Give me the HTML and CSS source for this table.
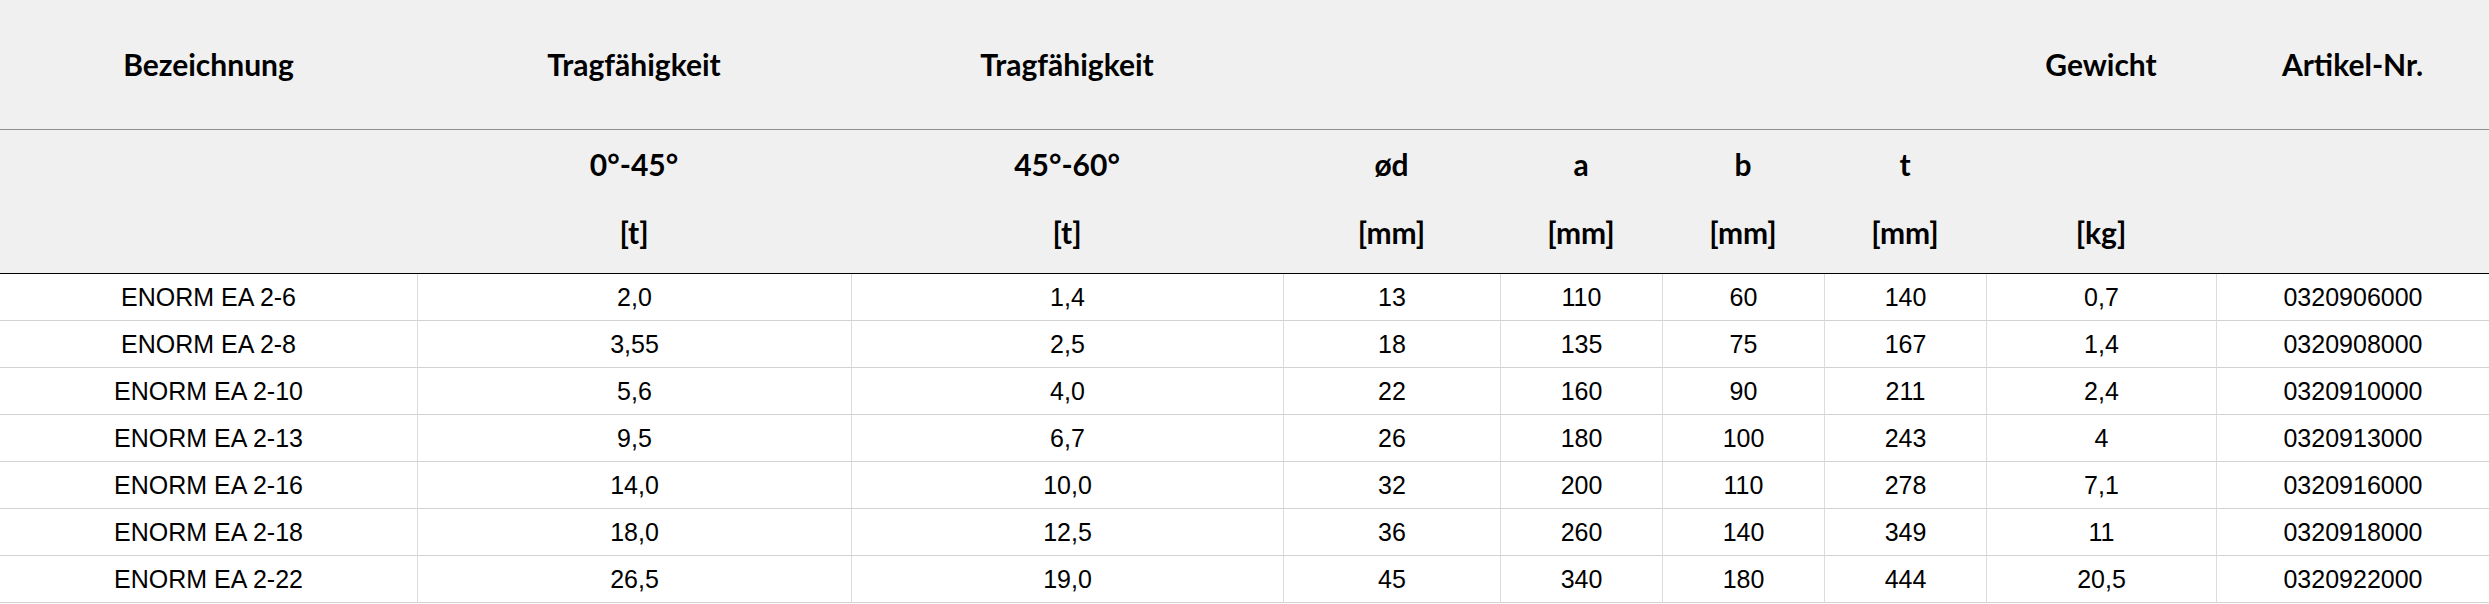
FILE: index.html
```html
<!DOCTYPE html>
<html lang="de">
<head>
<meta charset="utf-8">
<title>ENORM EA 2</title>
<link rel="stylesheet" href="styles.css">
</head>
<body>
<table class="spec">
  <colgroup>
    <col class="c1"><col class="c2"><col class="c3"><col class="c4"><col class="c5"><col class="c6"><col class="c7"><col class="c8"><col class="c9">
  </colgroup>
  <thead>
    <tr class="head-main">
      <th>Bezeichnung</th>
      <th>Tragfähigkeit</th>
      <th>Tragfähigkeit</th>
      <th></th>
      <th></th>
      <th></th>
      <th></th>
      <th>Gewicht</th>
      <th>Artikel-Nr.</th>
    </tr>
    <tr class="head-sub">
      <th></th>
      <th><span class="ln">0°-45°</span><span class="ln">[t]</span></th>
      <th><span class="ln">45°-60°</span><span class="ln">[t]</span></th>
      <th><span class="ln">ød</span><span class="ln">[mm]</span></th>
      <th><span class="ln">a</span><span class="ln">[mm]</span></th>
      <th><span class="ln">b</span><span class="ln">[mm]</span></th>
      <th><span class="ln">t</span><span class="ln">[mm]</span></th>
      <th><span class="ln"></span><span class="ln">[kg]</span></th>
      <th></th>
    </tr>
  </thead>
  <tbody>
    <tr><td>ENORM EA 2-6</td><td>2,0</td><td>1,4</td><td>13</td><td>110</td><td>60</td><td>140</td><td>0,7</td><td>0320906000</td></tr>
    <tr><td>ENORM EA 2-8</td><td>3,55</td><td>2,5</td><td>18</td><td>135</td><td>75</td><td>167</td><td>1,4</td><td>0320908000</td></tr>
    <tr><td>ENORM EA 2-10</td><td>5,6</td><td>4,0</td><td>22</td><td>160</td><td>90</td><td>211</td><td>2,4</td><td>0320910000</td></tr>
    <tr><td>ENORM EA 2-13</td><td>9,5</td><td>6,7</td><td>26</td><td>180</td><td>100</td><td>243</td><td>4</td><td>0320913000</td></tr>
    <tr><td>ENORM EA 2-16</td><td>14,0</td><td>10,0</td><td>32</td><td>200</td><td>110</td><td>278</td><td>7,1</td><td>0320916000</td></tr>
    <tr><td>ENORM EA 2-18</td><td>18,0</td><td>12,5</td><td>36</td><td>260</td><td>140</td><td>349</td><td>11</td><td>0320918000</td></tr>
    <tr><td>ENORM EA 2-22</td><td>26,5</td><td>19,0</td><td>45</td><td>340</td><td>180</td><td>444</td><td>20,5</td><td>0320922000</td></tr>
  </tbody>
</table>
</body>
</html>
```

FILE: styles.css
```css
html, body {
  margin: 0;
  padding: 0;
  background: #ffffff;
}

.spec {
  width: 2489px;
  table-layout: fixed;
  border-collapse: separate;
  border-spacing: 0;
  color: #000000;
}

.c1 { width: 417px; }
.c2 { width: 434px; }
.c3 { width: 432px; }
.c4 { width: 217px; }
.c5 { width: 162px; }
.c6 { width: 162px; }
.c7 { width: 162px; }
.c8 { width: 230px; }
.c9 { width: 273px; }

.spec th {
  font-family: Lato, "Open Sans", sans-serif;
  font-weight: 700;
  font-size: 30px;
  background: #f0f0f0;
  padding: 0;
  text-align: center;
  white-space: nowrap;
}

.head-main th {
  height: 129px;
  line-height: 129px;
  border-bottom: 1px solid #8f8f8f;
  vertical-align: middle;
}

.head-sub th {
  height: 136px;
  padding-bottom: 7px;
  border-bottom: 1px solid #000000;
  vertical-align: top;
}

.head-sub .ln {
  display: block;
  height: 68px;
  line-height: 68px;
}

.spec td {
  font-family: "Liberation Sans", Arial, sans-serif;
  font-size: 25px;
  height: 46px;
  padding: 0;
  text-align: center;
  vertical-align: middle;
  border-bottom: 1px solid #d2d2d2;
  border-left: 1px solid #dcdcdc;
  white-space: nowrap;
}

.spec td:first-child {
  border-left: none;
}
```
